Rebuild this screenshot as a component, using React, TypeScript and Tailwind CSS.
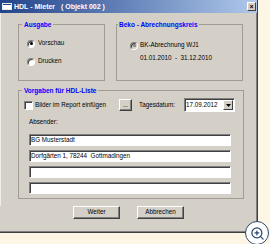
import { ZoomIn } from 'lucide-react';

const FIELDS = ['BG Musterstadt', 'Dorfgärten 1, 78244  Gottmadingen', '', ''];

function Radio({ checked, disabled }: { checked?: boolean; disabled?: boolean }) {
  return (
    <span
      className={`flex h-[8px] w-[8px] shrink-0 items-center justify-center rounded-full border border-t-[#808080] border-l-[#808080] border-b-white border-r-white shadow-[inset_1px_1px_0_#404040] ${
        disabled ? 'bg-[#d4d0c8]' : 'bg-white'
      }`}
    >
      {checked && <span className={`h-[3px] w-[3px] rounded-full ${disabled ? 'bg-[#808080]' : 'bg-black'}`} />}
    </span>
  );
}

function Button({ children, className = '' }: { children: React.ReactNode; className?: string }) {
  return (
    <button
      className={`flex items-center justify-center border border-t-white border-l-white border-b-[#404040] border-r-[#404040] bg-[#d4d0c8] text-[6.3px] leading-none text-black shadow-[inset_-1px_-1px_0_#808080] ${className}`}
    >
      {children}
    </button>
  );
}

function Field({ value }: { value: string }) {
  return (
    <div className="flex h-[12px] w-[202px] items-center border border-t-[#808080] border-l-[#808080] border-b-white border-r-white bg-white pl-[1px] shadow-[inset_1px_1px_0_#404040]">
      <span className="whitespace-pre text-[6.3px] leading-none text-black">{value}</span>
    </div>
  );
}

export default function App() {
  return (
    <div className="relative h-[244px] w-[270px] overflow-hidden bg-[#fdf6e4] font-['Liberation_Sans',Arial,sans-serif]">
      <div className="flex h-[233px] w-[258px] flex-col border-b border-r border-[#404040] bg-[#d4d0c8] shadow-[inset_-1px_-1px_0_#808080]">
        {/* Title bar */}
        <div className="flex h-[13px] items-center bg-gradient-to-r from-[#24448a] to-[#b0c8ea] pl-[2px]">
          <span className="flex h-[7px] w-[10px] flex-col border border-[#e8e8e8] bg-white">
            <span className="h-[1px] bg-[#24448a]" />
          </span>
          <span className="ml-[2px] whitespace-pre text-[7px] font-bold leading-none text-white">
            HDL - Mieter   ( Objekt 002 )
          </span>
          <span className="ml-auto mr-[1px] flex h-[9px] w-[9px] items-center justify-center border border-t-white border-l-white border-b-[#404040] border-r-[#404040] bg-[#d4d0c8] text-[7px] font-bold leading-none text-black">
            ×
          </span>
        </div>

        <div className="flex-1 border-l border-[#f0eee8] pl-[17px] pt-[7px]">
          {/* Top row */}
          <div className="flex gap-[11px]">
            <fieldset className="h-[61px] w-[87px] border border-[#a09c94]">
              <legend className="ml-[3px] px-[2px] text-[6.5px] font-bold leading-[9px] text-[#0000ff]">Ausgabe</legend>
              <div className="flex flex-col gap-[9px] pl-[8px] pt-[10px]">
                <label className="flex h-[9px] items-center gap-[3px] text-[6.3px] leading-none text-black">
                  <Radio checked />
                  Vorschau
                </label>
                <label className="flex h-[9px] items-center gap-[3px] text-[6.3px] leading-none text-black">
                  <Radio />
                  Drucken
                </label>
              </div>
            </fieldset>

            <fieldset className="h-[61px] w-[127px] border border-[#a09c94]">
              <legend className="ml-[1px] px-[1px] text-[6.5px] font-bold leading-[9px] text-[#0000ff]">
                Beko - Abrechnungskreis
              </legend>
              <div className="flex flex-col gap-[4px] pl-[13px] pt-[12px] text-[6.3px] leading-none text-black">
                <div className="flex h-[9px] items-center gap-[2px]">
                  <Radio checked disabled />
                  BK-Abrechnung WJ1
                </div>
                <div className="flex h-[9px] items-center whitespace-pre pl-[10px]">01.01.2010  -  31.12.2010</div>
              </div>
            </fieldset>
          </div>

          {/* Vorgaben */}
          <fieldset className="mt-[5px] h-[113px] w-[226px] border border-[#a09c94]">
            <legend className="ml-[3px] px-[2px] text-[6.5px] font-bold leading-[9px] text-[#0000ff]">
              Vorgaben für HDL-Liste
            </legend>
            <div className="flex flex-col pt-[3px]">
              <div className="flex h-[14px] items-center pl-[5px] text-[6.3px] leading-none text-black">
                <label className="flex w-[95px] items-center gap-[2px]">
                  <span className="h-[9px] w-[9px] border border-t-[#808080] border-l-[#808080] border-b-white border-r-white bg-white shadow-[inset_1px_1px_0_#404040]" />
                  Bilder im Report einfügen
                </label>
                <Button className="h-[12px] w-[13px]">...</Button>
                <span className="ml-[7px] w-[45px]">Tagesdatum:</span>
                <div className="flex h-[14px] w-[51px] items-center border border-t-[#808080] border-l-[#808080] border-b-white border-r-white bg-white pl-[1px] shadow-[inset_1px_1px_0_#404040]">
                  <span className="flex-1">17.09.2012</span>
                  <span className="mr-[1px] flex h-[10px] w-[10px] items-center justify-center border border-t-white border-l-white border-b-[#404040] border-r-[#404040] bg-[#d4d0c8]">
                    <svg width="5" height="3" viewBox="0 0 5 3">
                      <path d="M0 0h5L2.5 3z" fill="#000" />
                    </svg>
                  </span>
                </div>
              </div>

              <div className="ml-[10px] mt-[6px] flex h-[9px] items-center text-[6.3px] leading-none text-black">Absender:</div>

              <div className="ml-[10px] mt-[7px] flex flex-col gap-[4px]">
                {FIELDS.map((f, i) => (
                  <Field key={i} value={f} />
                ))}
              </div>
            </div>
          </fieldset>
        </div>

        {/* Buttons */}
        <div className="mb-[13px] flex justify-center gap-[17px]">
          <Button className="h-[13px] w-[47px]">Weiter</Button>
          <Button className="h-[13px] w-[47px]">Abbrechen</Button>
        </div>
      </div>

      {/* Zoom badge */}
      <div className="absolute left-[245px] top-[221px] flex h-[24px] w-[24px] items-center justify-center rounded-full border-[1.5px] border-[#28466e] bg-white">
        <ZoomIn size={15} strokeWidth={2} color="#28466e" />
      </div>
    </div>
  );
}
